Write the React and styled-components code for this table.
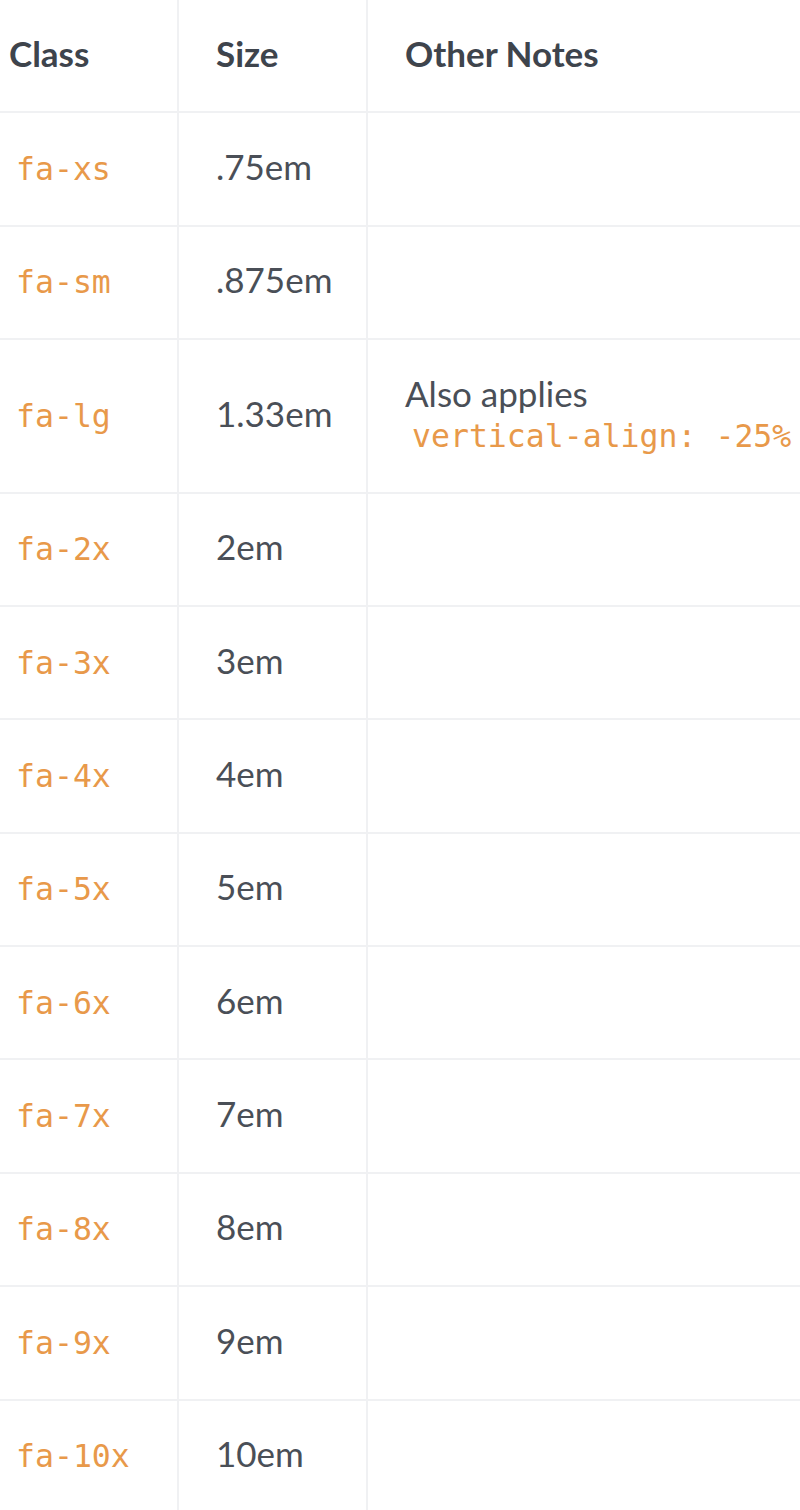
import React from "react";
import styled, { createGlobalStyle } from "styled-components";

const Global = createGlobalStyle`
  html, body { margin: 0; padding: 0; background: #fff; }
  body { font-family: Lato, "Open Sans", sans-serif; -webkit-font-smoothing: antialiased; }
`;

const Table = styled.div`
  width: 800px;
  overflow: hidden;
  background: #fff;
`;

const Row = styled.div`
  display: grid;
  grid-template-columns: 179px 189px 1fr;
  border-bottom: 2px solid #f0f1f3;
`;

const Cell = styled.div`
  display: flex;
  flex-direction: column;
  justify-content: center;
  padding: 35.7px 0 35.7px ${(p) => (p.$first ? "9px" : "37px")};
  border-right: ${(p) => (p.$last ? "none" : "2px solid #f0f1f3")};
  font-size: 35px;
  line-height: 40px;
  color: #4a4f57;
  white-space: nowrap;
`;

const HeadCell = styled(Cell)`
  font-weight: 700;
  color: #3e444c;
`;

const Line = styled.span`
  display: block;
  line-height: 34px;
  padding-bottom: 6px;
`;

const Code = styled.code`
  display: block;
  line-height: 40px;
  font-family: "DejaVu Sans Mono", "Liberation Mono", monospace;
  font-size: 31.5px;
  color: #e8994a;
  padding: 0 7px;
`;

const rows = [
  ["fa-xs", ".75em"],
  ["fa-sm", ".875em"],
  ["fa-lg", "1.33em", true],
  ["fa-2x", "2em"],
  ["fa-3x", "3em"],
  ["fa-4x", "4em"],
  ["fa-5x", "5em"],
  ["fa-6x", "6em"],
  ["fa-7x", "7em"],
  ["fa-8x", "8em"],
  ["fa-9x", "9em"],
  ["fa-10x", "10em"],
];

export default function App() {
  return (
    <>
      <Global />
      <Table>
        <Row>
          <HeadCell $first>
            <Line>Class</Line>
          </HeadCell>
          <HeadCell>
            <Line>Size</Line>
          </HeadCell>
          <HeadCell $last>
            <Line>Other Notes</Line>
          </HeadCell>
        </Row>
        {rows.map(([cls, size, note]) => (
          <Row key={cls}>
            <Cell $first>
              <Code>{cls}</Code>
            </Cell>
            <Cell>
              <Line>{size}</Line>
            </Cell>
            <Cell $last>
              {note ? (
                <>
                  <Line>Also applies</Line>
                  <Code>vertical-align: -25%</Code>
                </>
              ) : null}
            </Cell>
          </Row>
        ))}
      </Table>
    </>
  );
}
